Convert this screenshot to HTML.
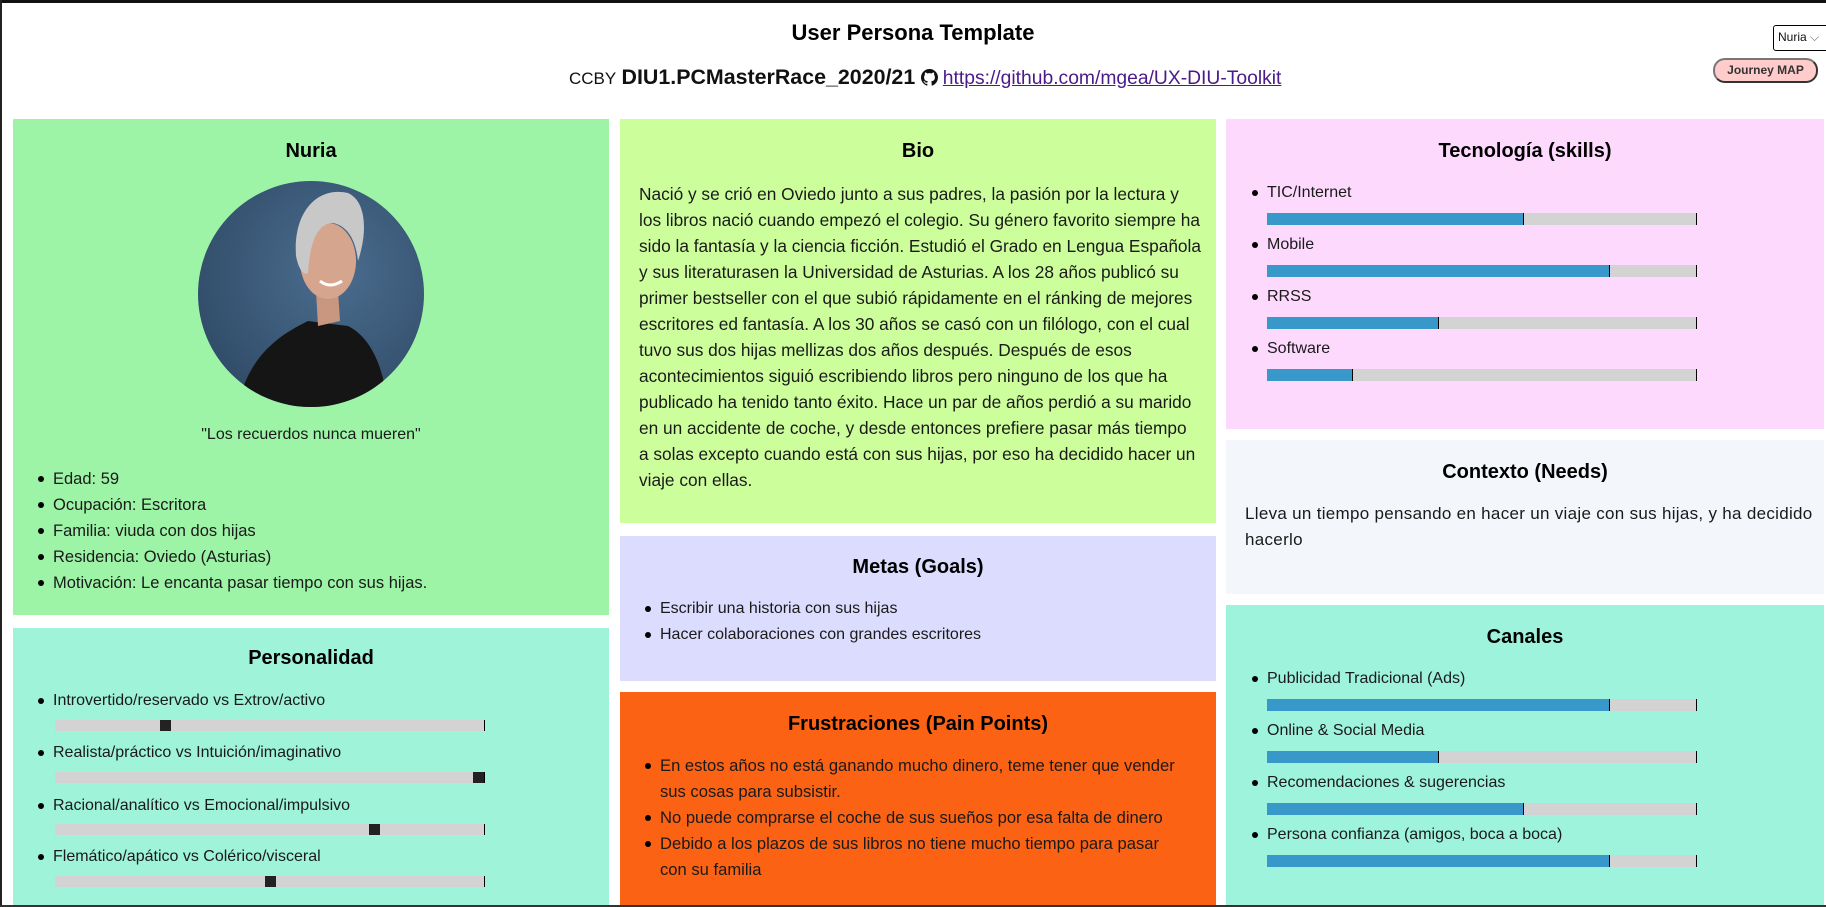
<!DOCTYPE html>
<html><head><meta charset="utf-8">
<style>
*{margin:0;padding:0;box-sizing:border-box}
html,body{width:1826px;height:907px;overflow:hidden;background:#fff}
body{position:relative;font-family:"Liberation Sans",sans-serif;color:#111}
.frame-top{position:absolute;left:0;top:0;width:1826px;height:3px;background:#111}
.frame-left{position:absolute;left:0;top:0;width:2px;height:907px;background:#222}
.frame-bot{position:absolute;left:0;top:905px;width:1826px;height:2px;background:#333}
.card{position:absolute}
.h{position:absolute;font-weight:bold;font-size:20px;line-height:26px;text-align:center;white-space:nowrap;color:#000}
.t{position:absolute;font-size:16px;line-height:26px;white-space:nowrap;color:#1a1a1a}
.li{position:absolute;font-size:16px;line-height:26px;white-space:nowrap;color:#1a1a1a}
.li::before{content:"";position:absolute;left:-15px;top:10px;width:6px;height:6px;border-radius:50%;background:#000}
.bar{position:absolute;height:12px;background:#d3d3d3;border-right:1.5px solid #000}
.fill{position:absolute;left:0;top:0;height:100%;background:#3798c9;border-right:1.5px solid #000}
.thumb{position:absolute;top:0;width:11px;height:11px;background:#222}
</style></head><body>
<div class="frame-top"></div>
<div class="frame-left"></div>

<div class="h" style="left:0;width:1826px;top:20px;font-size:22px">User Persona Template</div>
<div style="position:absolute;left:569px;top:64px;line-height:26px;white-space:nowrap;font-size:19px">
<span style="font-size:17px">CCBY</span> <b style="font-weight:bold;font-size:21.4px">DIU1.PCMasterRace_2020/21</b>
<svg width="17" height="17" viewBox="0 0 16 16" style="vertical-align:-2px"><path fill="#111" d="M8 0C3.58 0 0 3.58 0 8c0 3.54 2.29 6.53 5.47 7.59.4.07.55-.17.55-.38v-1.33c-2.23.48-2.7-1.07-2.7-1.07-.36-.92-.89-1.170-.89-1.170-.73-.5.06-.49.06-.49.8.06 1.23.83 1.23.83.72 1.22 1.87.87 2.33.67.07-.52.28-.87.5-1.07-1.78-.2-3.65-.89-3.65-3.95 0-.87.31-1.59.82-2.15-.08-.2-.36-1.02.08-2.12 0 0 .67-.21 2.2.82a7.6 7.6 0 014 0c1.53-1.04 2.2-.82 2.2-.82.44 1.1.16 1.92.08 2.12.51.56.82 1.27.82 2.15 0 3.07-1.87 3.75-3.65 3.95.29.25.54.73.54 1.48v2.2c0 .21.15.46.55.38A8 8 0 0016 8c0-4.42-3.58-8-8-8z"/></svg>
<span style="color:#4b1a8a;text-decoration:underline;font-size:19.3px">https://github.com/mgea/UX-DIU-Toolkit</span>
</div>

<div style="position:absolute;left:1773px;top:25px;width:60px;height:26px;border:1.5px solid #000;border-radius:3px;background:#fff;font-size:12px;line-height:23px;padding-left:4px;white-space:nowrap">Nuria <span style="color:#666">⌵</span></div>
<div style="position:absolute;left:1713px;top:58px;width:105px;height:25px;border:2px solid #777;border-right-color:#333;border-bottom-color:#333;border-radius:12px;background:#ffcccb;font-size:12px;font-weight:bold;color:#333;text-align:center;line-height:21px">Journey MAP</div>

<!-- Column 1 -->
<div class="card" style="left:13px;top:119px;width:596px;height:496px;background:#9df4a7"></div>
<div class="h" style="left:13px;width:596px;top:138px">Nuria</div>
<svg style="position:absolute;left:198px;top:181px" width="226" height="226" viewBox="0 0 226 226">
<defs><clipPath id="c"><circle cx="113" cy="113" r="113"/></clipPath>
<radialGradient id="bg" cx="0.6" cy="0.4" r="0.7"><stop offset="0" stop-color="#4b6d8f"/><stop offset="1" stop-color="#2f4a66"/></radialGradient></defs>
<g clip-path="url(#c)">
<rect width="226" height="226" fill="url(#bg)"/>
<path d="M40 226 C50 170 90 150 110 140 L150 145 C170 155 185 180 190 226 Z" fill="#151515"/>
<path d="M118 110 L140 110 L142 140 L120 145 Z" fill="#c99680"/>
<ellipse cx="130" cy="80" rx="28" ry="38" fill="#d6a58d"/>
<path d="M98 75 C95 30 120 5 150 12 C168 20 170 50 160 80 C158 60 150 45 135 42 C120 42 112 60 110 92 C104 95 100 85 98 75 Z" fill="#c8c8c8"/>
<path d="M122 100 Q132 108 144 100" stroke="#fff" stroke-width="3" fill="none"/>
</g></svg>
<div class="t" style="left:13px;width:596px;top:422px;text-align:center">"Los recuerdos nunca mueren"</div>
<div class="li" style="left:53px;top:466px;font-size:16.5px">Edad: 59</div>
<div class="li" style="left:53px;top:492px;font-size:16.5px">Ocupación: Escritora</div>
<div class="li" style="left:53px;top:518px;font-size:16.5px">Familia: viuda con dos hijas</div>
<div class="li" style="left:53px;top:544px;font-size:16.5px">Residencia: Oviedo (Asturias)</div>
<div class="li" style="left:53px;top:570px;font-size:16.5px">Motivación: Le encanta pasar tiempo con sus hijas.</div>

<div class="card" style="left:13px;top:628px;width:596px;height:279px;background:#9ef3d9"></div>
<div class="h" style="left:13px;width:596px;top:645px">Personalidad</div>
<div class="li" style="left:53px;top:688px">Introvertido/reservado vs Extrov/activo</div>
<div class="bar" style="left:55px;top:720px;width:430px;height:11px"><div class="thumb" style="left:105px"></div></div>
<div class="li" style="left:53px;top:740px">Realista/práctico vs Intuición/imaginativo</div>
<div class="bar" style="left:55px;top:772px;width:430px;height:11px"><div class="thumb" style="left:418px"></div></div>
<div class="li" style="left:53px;top:793px">Racional/analítico vs Emocional/impulsivo</div>
<div class="bar" style="left:55px;top:824px;width:430px;height:11px"><div class="thumb" style="left:314px"></div></div>
<div class="li" style="left:53px;top:844px">Flemático/apático vs Colérico/visceral</div>
<div class="bar" style="left:55px;top:876px;width:430px;height:11px"><div class="thumb" style="left:210px"></div></div>

<!-- Column 2 -->
<div class="card" style="left:620px;top:119px;width:596px;height:404px;background:#cdfe9c"></div>
<div class="h" style="left:620px;width:596px;top:138px">Bio</div>
<div class="t" style="left:639px;top:181px;font-size:17.3px">Nació y se crió en Oviedo junto a sus padres, la pasión por la lectura y<br>los libros nació cuando empezó el colegio. Su género favorito siempre ha<br>sido la fantasía y la ciencia ficción. Estudió el Grado en Lengua Española<br>y sus literaturasen la Universidad de Asturias. A los 28 años publicó su<br>primer bestseller con el que subió rápidamente en el ránking de mejores<br>escritores ed fantasía. A los 30 años se casó con un filólogo, con el cual<br>tuvo sus dos hijas mellizas dos años después. Después de esos<br>acontecimientos siguió escribiendo libros pero ninguno de los que ha<br>publicado ha tenido tanto éxito. Hace un par de años perdió a su marido<br>en un accidente de coche, y desde entonces prefiere pasar más tiempo<br>a solas excepto cuando está con sus hijas, por eso ha decidido hacer un<br>viaje con ellas.</div>

<div class="card" style="left:620px;top:536px;width:596px;height:145px;background:#dcdcfe"></div>
<div class="h" style="left:620px;width:596px;top:554px">Metas (Goals)</div>
<div class="li" style="left:660px;top:596px">Escribir una historia con sus hijas</div>
<div class="li" style="left:660px;top:622px">Hacer colaboraciones con grandes escritores</div>

<div class="card" style="left:620px;top:692px;width:596px;height:215px;background:#fb6214"></div>
<div class="h" style="left:620px;width:596px;top:711px">Frustraciones (Pain Points)</div>
<div class="li" style="left:660px;top:753px;font-size:16.6px">En estos años no está ganando mucho dinero, teme tener que vender<br>sus cosas para subsistir.</div>
<div class="li" style="left:660px;top:805px;font-size:16.6px">No puede comprarse el coche de sus sueños por esa falta de dinero</div>
<div class="li" style="left:660px;top:831px;font-size:16.6px">Debido a los plazos de sus libros no tiene mucho tiempo para pasar<br>con su familia</div>

<!-- Column 3 -->
<div class="card" style="left:1226px;top:119px;width:598px;height:310px;background:#fddafd"></div>
<div class="h" style="left:1226px;width:598px;top:138px">Tecnología (skills)</div>
<div class="li" style="left:1267px;top:180px">TIC/Internet</div>
<div class="bar" style="left:1267px;top:213px;width:430px"><div class="fill" style="width:60%"></div></div>
<div class="li" style="left:1267px;top:232px">Mobile</div>
<div class="bar" style="left:1267px;top:265px;width:430px"><div class="fill" style="width:80%"></div></div>
<div class="li" style="left:1267px;top:284px">RRSS</div>
<div class="bar" style="left:1267px;top:317px;width:430px"><div class="fill" style="width:40%"></div></div>
<div class="li" style="left:1267px;top:336px">Software</div>
<div class="bar" style="left:1267px;top:369px;width:430px"><div class="fill" style="width:20%"></div></div>

<div class="card" style="left:1226px;top:440px;width:598px;height:154px;background:#f3f6fb"></div>
<div class="h" style="left:1226px;width:598px;top:459px">Contexto (Needs)</div>
<div class="t" style="left:1245px;top:501px;font-size:17px;letter-spacing:0.3px">Lleva un tiempo pensando en hacer un viaje con sus hijas, y ha decidido<br>hacerlo</div>

<div class="card" style="left:1226px;top:605px;width:598px;height:302px;background:#9ef3dc"></div>
<div class="h" style="left:1226px;width:598px;top:624px">Canales</div>
<div class="li" style="left:1267px;top:666px">Publicidad Tradicional (Ads)</div>
<div class="bar" style="left:1267px;top:699px;width:430px"><div class="fill" style="width:80%"></div></div>
<div class="li" style="left:1267px;top:718px">Online &amp; Social Media</div>
<div class="bar" style="left:1267px;top:751px;width:430px"><div class="fill" style="width:40%"></div></div>
<div class="li" style="left:1267px;top:770px">Recomendaciones &amp; sugerencias</div>
<div class="bar" style="left:1267px;top:803px;width:430px"><div class="fill" style="width:60%"></div></div>
<div class="li" style="left:1267px;top:822px">Persona confianza (amigos, boca a boca)</div>
<div class="bar" style="left:1267px;top:855px;width:430px"><div class="fill" style="width:80%"></div></div>

<div class="frame-bot"></div>
</body></html>
